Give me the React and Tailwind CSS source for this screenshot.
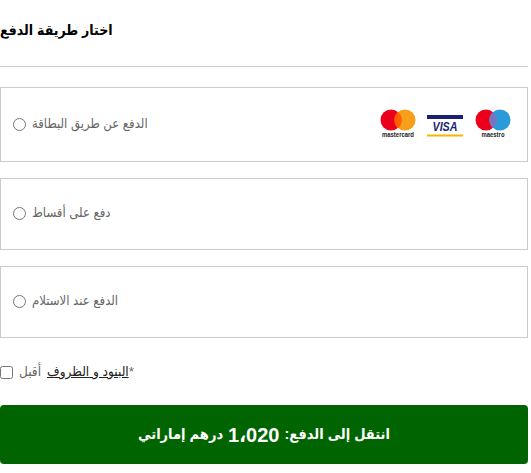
function MastercardLogo() {
  return (
    <svg width="36" height="29" viewBox="0 0 36 29" className="-mt-[3px]">
      <circle cx="11" cy="11" r="10.5" fill="#eb001b" />
      <circle cx="25" cy="11" r="10.5" fill="#f79e1b" />
      <path d="M18 2.9a10.5 10.5 0 0 1 0 16.2a10.5 10.5 0 0 1 0-16.2z" fill="#ff5f00" />
      <text x="18" y="28" textAnchor="middle" fontSize="6.5" textLength="32" lengthAdjust="spacingAndGlyphs" fontWeight="700" fill="#222" fontFamily="Liberation Sans, sans-serif">mastercard</text>
    </svg>
  );
}

function VisaLogo() {
  return (
    <svg width="36" height="22" viewBox="0 0 36 22" className="mt-[3px]">
      <rect x="0" y="0" width="36" height="4" fill="#1a1f71" />
      <rect x="0" y="19.5" width="36" height="2" fill="#f7b600" />
      <text x="18" y="16" textAnchor="middle" fontSize="12" textLength="25" lengthAdjust="spacingAndGlyphs" fontWeight="700" fontStyle="italic" fill="#1a1f71" fontFamily="Liberation Sans, sans-serif">VISA</text>
    </svg>
  );
}

function MaestroLogo() {
  return (
    <svg width="36" height="29" viewBox="0 0 36 29" className="-mt-[3px] ml-px">
      <circle cx="11" cy="11" r="10.5" fill="#eb001b" />
      <circle cx="25" cy="11" r="10.5" fill="#2a9bd8" />
      <path d="M18 2.9a10.5 10.5 0 0 1 0 16.2a10.5 10.5 0 0 1 0-16.2z" fill="#7673c0" />
      <text x="18" y="28" textAnchor="middle" fontSize="6.5" textLength="23" lengthAdjust="spacingAndGlyphs" fontWeight="700" fill="#222" fontFamily="Liberation Sans, sans-serif">maestro</text>
    </svg>
  );
}

function PaymentOption({ label, height, logos }) {
  return (
    <label className={`flex items-center justify-between border border-[#ccc] pl-3 pr-4 ${height}`}>
      <span className="flex items-center gap-[6px]">
        <input type="radio" name="payment" className="m-0 -mt-px size-[13px]" />
        <span className="-mt-[2px] text-[13px] text-[#666]">{label}</span>
      </span>
      {logos && (
        <span className="flex items-center gap-[11px]">
          <MastercardLogo />
          <VisaLogo />
          <MaestroLogo />
        </span>
      )}
    </label>
  );
}

export default function App() {
  return (
    <div className="w-[528px] bg-white font-['Liberation_Sans','DejaVu_Sans_Condensed','DejaVu_Sans',sans-serif]">
      <h2 className="pt-[19px] pb-[25px] text-sm leading-[22px] font-bold text-black">اختار طريقة الدفع</h2>
      <hr className="border-[#ccc]" />

      <div className="mt-5 flex flex-col gap-4">
        <PaymentOption label="الدفع عن طريق البطاقة" height="h-[75px]" logos />
        <PaymentOption label="دفع على أقساط" height="h-[72px]" />
        <PaymentOption label="الدفع عند الاستلام" height="h-[72px]" />
      </div>

      <div className="mt-6 flex items-center gap-[6px] text-[13.5px] text-[#666]">
        <input type="checkbox" className="m-0 size-[13px]" />
        <span>أقبل</span>
        <a className="text-[#222] underline">البنود و الظروف</a>
        <span className="-ml-[6px]">*</span>
      </div>

      <button dir="rtl" className="mt-[23px] flex h-[59px] w-full items-center justify-center gap-[5px] rounded bg-[#006400] text-[14.5px] font-bold text-white">
        <span>انتقل إلى الدفع:</span>
        <span className="text-[20px]">1،020</span>
        <span>درهم إماراتي</span>
      </button>
    </div>
  );
}
